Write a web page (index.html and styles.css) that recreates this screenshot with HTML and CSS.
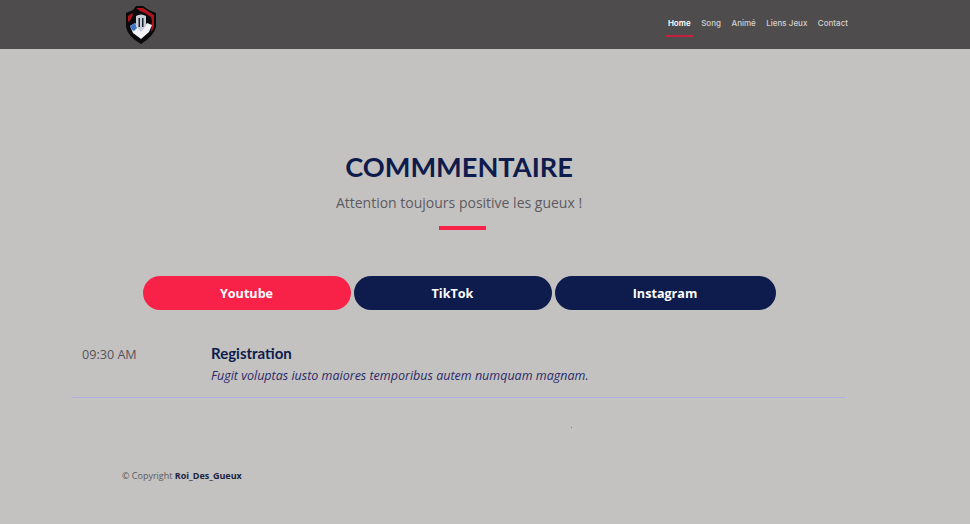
FILE: index.html
```html
<!DOCTYPE html>
<html>
<head>
<meta charset="utf-8"/>
<title>Commmentaire</title>
<link rel="stylesheet" href="styles.css">
</head>
<body>

<header class="topbar">
  <a class="logo" href="#">
    <svg width="32" height="40" viewBox="0 0 32 40">
      <path d="M11 2 L18 2 L24 6 L31 9 L31 23 Q29 32 16 40 Q3 33 1 23 L1 9 L8 6 Z" fill="#0a0a0c"/>
      <path d="M11 4 L18 4 L24 8 L29 11 L29 22 Q28 26 26 28 L27 17 L26 13 L20 9 L15 7 Z" fill="#b3121d"/>
      <path d="M3 12 L8 9 L7 13 L4 18 L3 17 Z" fill="#b3121d"/>
      <path d="M5 22 L10 19 L16 27 L22 19 L27 21 L24 28 L16 35 L8 29 Z" fill="#f1f3f7"/>
      <path d="M5 22 L10 19 L12 24 L9 27 L7 26 Z" fill="#3f74c4"/>
      <path d="M11 12 Q16 9 21 12 L21 22 L16 28 L11 22 Z" fill="#c9ced6"/>
      <path d="M13.5 14 H15 V23 H13.5 Z M17 14 H18.5 V23 H17 Z" fill="#1a2230"/>
    </svg>
  </a>
  <nav class="menu">
    <a class="menu-item active" href="#">Home</a>
    <a class="menu-item" href="#">Song</a>
    <a class="menu-item" href="#">Animé</a>
    <a class="menu-item" href="#">Liens Jeux</a>
    <a class="menu-item" href="#">Contact</a>
  </nav>
</header>

<main class="content">
  <div class="section-title">
    <h2>COMMMENTAIRE</h2>
    <p>Attention toujours positive les gueux !</p>
    <div class="title-bar"></div>
  </div>

  <ul class="tabs">
    <li class="tab tab-yt active">Youtube</li>
    <li class="tab tab-tt">TikTok</li>
    <li class="tab tab-ig">Instagram</li>
  </ul>

  <div class="schedule-item">
    <time class="schedule-time">09:30 AM</time>
    <div class="schedule-body">
      <h4>Registration</h4>
      <p>Fugit voluptas iusto maiores temporibus autem numquam magnam.</p>
    </div>
  </div>
  <div class="speck-row"><span class="speck"></span></div>
</main>

<footer class="footer">
  © Copyright <strong>Roi_Des_Gueux</strong>
</footer>

</body>
</html>
```

FILE: styles.css
```css
html, body {
  margin: 0;
  height: 100%;
}

body {
  background-color: #c4c2c0;
  font-family: "Open Sans", sans-serif;
  color: #444;
  overflow: hidden;
}

a {
  text-decoration: none;
}

.topbar {
  height: 49px;
  background-color: #4e4c4d;
  display: flex;
  align-items: center;
  justify-content: space-between;
  padding: 0 120px 0 125px;
}

.logo {
  display: flex;
  margin-top: -1px;
}

.menu {
  display: flex;
  gap: 6.5px;
  height: 49px;
}

.menu-item {
  font-family: "Inter", sans-serif;
  font-size: 8px;
  font-weight: 500;
  color: #d3d1d1;
  padding: 0 2px;
  height: 37px;
  line-height: 47px;
  box-sizing: border-box;
}

.menu-item.active {
  color: #fff;
  font-weight: 600;
  border-bottom: 2px solid #c4213f;
}

.content {
  width: 918px;
}

.section-title {
  text-align: center;
  padding-top: 100px;
}

.section-title h2 {
  margin: 0;
  font-family: "Lato", sans-serif;
  font-size: 27.2px;
  font-weight: 700;
  line-height: 36px;
  color: #0e1b4d;
}

.section-title p {
  margin: 8px 0 0;
  font-size: 14px;
  line-height: 20px;
  color: #5c5a60;
}

.title-bar {
  width: 47px;
  height: 4px;
  margin: 13px 0 0 439px;
  background-color: #f82249;
}

.tabs {
  list-style: none;
  margin: 46px 0 0;
  padding: 0;
  display: flex;
  justify-content: center;
  gap: 3px;
}

.tab {
  height: 34px;
  line-height: 35px;
  border-radius: 17px;
  text-align: center;
  font-size: 12.6px;
  font-weight: 700;
  color: #fff;
  background-color: #0e1b4d;
}

.tab.active {
  background-color: #f82249;
}

.tab-yt { width: 208px; }
.tab-tt { width: 198px; }
.tab-ig { width: 221px; }

.schedule-item {
  display: flex;
  width: 763px;
  margin: 33px 0 0 72px;
  padding: 0 0 11px 10px;
  border-bottom: 1px solid #aeb0dc;
}

.schedule-time {
  width: 129px;
  padding-top: 2px;
  font-size: 12.6px;
  line-height: 20px;
  color: #55535a;
}

.schedule-body h4 {
  margin: 0;
  font-family: "Lato", sans-serif;
  font-size: 15px;
  font-weight: 700;
  line-height: 20px;
  color: #0e1b4d;
}

.schedule-body p {
  margin: 3px 0 0;
  font-size: 12.5px;
  font-style: italic;
  line-height: 20px;
  color: #2a2a6a;
}

.speck-row {
  height: 30px;
  display: flex;
  align-items: flex-end;
  padding-left: 571px;
}

.speck {
  width: 1px;
  height: 1px;
  background-color: #77758f;
}

.footer {
  margin-top: 42px;
  padding-left: 122px;
  font-size: 9px;
  line-height: 12px;
  color: #5b595b;
}

.footer strong {
  color: #1c2340;
}
```
